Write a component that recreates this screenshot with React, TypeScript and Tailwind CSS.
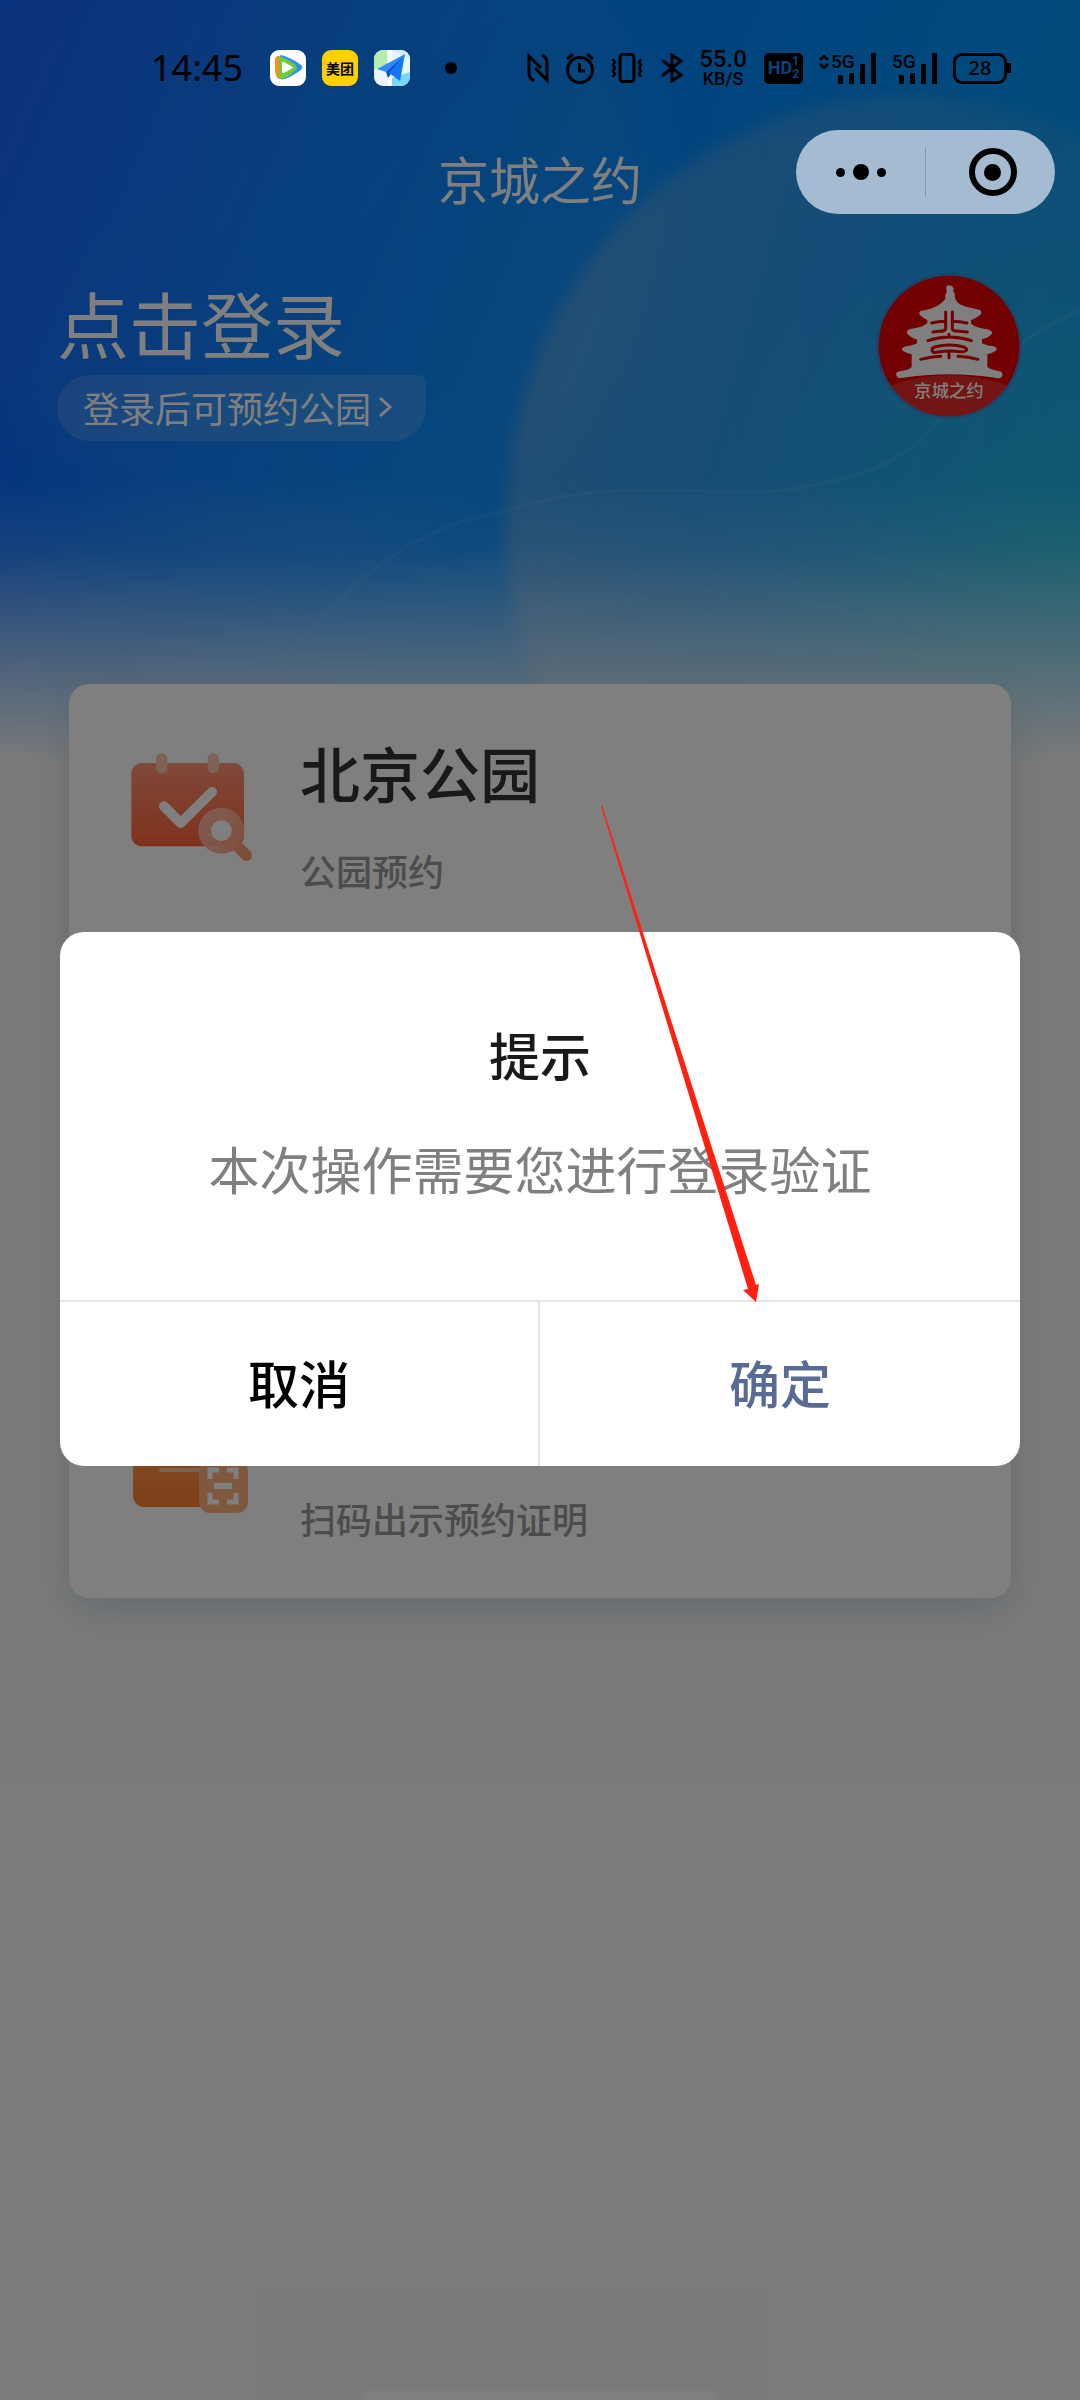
import type { ReactNode } from "react";

const FONT = "font-['Noto_Sans_CJK_SC','Noto_Sans',sans-serif]";

function HeaderBackdrop() {
  return (
    <svg
      aria-hidden="true"
      className="absolute inset-x-0 top-0 h-[760px] w-full"
      viewBox="0 0 1080 760"
      preserveAspectRatio="none"
    >
      <defs>
        <linearGradient id="sky" x1="0" y1="0.2" x2="1" y2="0.5">
          <stop offset="0" stopColor="#1262fa" />
          <stop offset="0.25" stopColor="#0578fc" />
          <stop offset="0.45" stopColor="#0084fe" />
          <stop offset="0.75" stopColor="#0090fc" />
          <stop offset="1" stopColor="#009cf4" />
        </linearGradient>
        <radialGradient id="teal" cx="1080" cy="560" r="380" gradientUnits="userSpaceOnUse">
          <stop offset="0" stopColor="#14c8d0" stopOpacity="0.6" />
          <stop offset="1" stopColor="#14b4e0" stopOpacity="0" />
        </radialGradient>
        <linearGradient id="orb" x1="0" y1="0.35" x2="1" y2="0.65">
          <stop offset="0" stopColor="#c0c0c0" stopOpacity="0.34" />
          <stop offset="0.5" stopColor="#b0c0c8" stopOpacity="0.16" />
          <stop offset="1" stopColor="#b0c8c8" stopOpacity="0.04" />
        </linearGradient>
        <linearGradient id="leftOrb" x1="0" y1="0" x2="0.8" y2="1">
          <stop offset="0" stopColor="#c0d0e0" stopOpacity="0.03" />
          <stop offset="1" stopColor="#c0d0e0" stopOpacity="0.08" />
        </linearGradient>
        <linearGradient id="fade" x1="0" y1="0" x2="0" y2="1">
          <stop offset="0" stopColor="#f5f5f5" stopOpacity="0" />
          <stop offset="0.25" stopColor="#f5f5f5" stopOpacity="0.14" />
          <stop offset="0.75" stopColor="#f5f5f5" stopOpacity="0.72" />
          <stop offset="1" stopColor="#f5f5f5" />
        </linearGradient>
        <filter id="soft" x="-10%" y="-10%" width="120%" height="120%">
          <feGaussianBlur stdDeviation="9" />
        </filter>
        <filter id="softer" x="-20%" y="-20%" width="140%" height="140%">
          <feGaussianBlur stdDeviation="22" />
        </filter>
      </defs>
      <rect width="1080" height="760" fill="url(#sky)" />
      <rect width="1080" height="760" fill="url(#teal)" />
      <circle cx="300" cy="190" r="360" fill="url(#leftOrb)" filter="url(#softer)" />
      <ellipse cx="910" cy="520" rx="404" ry="424" fill="url(#orb)" filter="url(#soft)" />
      <path
        d="M272 677C330 600 400 530 496 513C600 480 660 492 758 492C850 486 910 460 940 420C980 380 1010 340 1080 310"
        fill="none"
        stroke="#fff"
        strokeOpacity="0.07"
        strokeWidth="3"
      />
      <rect y="480" width="1080" height="280" fill="url(#fade)" />
    </svg>
  );
}

function VideoAppIcon() {
  return (
    <svg width="36" height="36" viewBox="0 0 36 36" aria-hidden="true">
      <rect width="36" height="36" rx="9" fill="#fff" />
      <path d="M10 5.500C13 4 30 13 32 16c1 1.500 0 3-2 4.500C25 24.500 15 30 11 29.500z" fill="#2d8ef0" />
      <path d="M5 12c0-5 2-6.500 5-5.500 7 2.500 17 8 17 11S16 29 10 29c-4 0-5-8-5-17z" fill="#6ecb3c" />
      <path d="M5 12c0-4 1-6 4-6v23c-4-1-4-9-4-17z" fill="#ff8d1a" />
      <path d="M12 13.500c0-1.500 1-2 2-1.500l8 4.500c1 .6 1 1.400 0 2l-8 4.500c-1 .5-2 0-2-1.500z" fill="#fff" />
    </svg>
  );
}

function MapAppIcon() {
  return (
    <svg width="36" height="36" viewBox="0 0 36 36" aria-hidden="true">
      <defs>
        <clipPath id="mapClip">
          <rect width="36" height="36" rx="9" />
        </clipPath>
      </defs>
      <g clipPath="url(#mapClip)">
        <rect width="36" height="36" fill="#eaf4fc" />
        <path d="M0 0h13v15L0 20z" fill="#b5ecab" />
        <path d="M18 0h18v9z" fill="#d5eefb" />
        <path d="M18 28l18-6v14H18z" fill="#78d8fc" />
        <path d="M14 0h4v36h-4z" fill="#fff" />
        <path d="M31 4L3 19l9 3z" fill="#2f8bff" />
        <path d="M31 4L12 22l2 6 3-4z" fill="#0a50c0" />
        <path d="M31 4l-5 27-11-8z" fill="#1577f8" />
      </g>
    </svg>
  );
}

function Signal({ arrows = false }: { arrows?: boolean }) {
  return (
    <span className="flex h-[31px]">
      {arrows && (
        <svg className="mt-[2px] mr-[2px]" width="10" height="14" viewBox="0 0 10 14" aria-hidden="true">
          <path d="M1 5l4-4 4 4M1 9l4 4 4-4" fill="none" stroke="#000" strokeWidth="2.500" />
        </svg>
      )}
      <span className="flex w-[29px] flex-col justify-between">
        <span className="font-[Roboto] text-[19px] leading-[18px] font-medium">5G</span>
        <svg className="ml-[7px]" width="16" height="11" viewBox="0 0 16 11" aria-hidden="true">
          <path d="M0 2h5v9H0zM11 0h5v11h-5z" />
        </svg>
      </span>
      <svg width="16" height="31" viewBox="0 0 16 31" aria-hidden="true">
        <path d="M0 11h5v20H0zM11 0h5v31h-5z" />
      </svg>
    </span>
  );
}

function StatusBar() {
  return (
    <div className="relative z-20 flex h-[110px] items-center justify-between pt-[26px] pr-[69px] pl-[151px] text-black">
      <div className="flex items-center">
        <span className="w-[119px] font-['Noto_Sans'] text-[36px] leading-none">14:45</span>
        <div className="flex items-center gap-4">
          <VideoAppIcon />
          <span className="flex size-9 items-center justify-center rounded-[9px] bg-[#ffd000] text-[14px] leading-none font-bold">
            美团
          </span>
          <MapAppIcon />
        </div>
        <span className="ml-[35px] size-3 rounded-full bg-black" />
      </div>

      <div className="flex items-center">
        <svg width="22" height="30" viewBox="0 0 22 30" fill="none" stroke="#000" strokeWidth="3" aria-label="NFC">
          <path d="M7 28C3 26 2 24 2 20V3l12 12M8 15l12 12V10c0-4-1-6-5-8" />
        </svg>
        <svg className="ml-4" width="30" height="32" viewBox="0 0 30 32" fill="none" stroke="#000" strokeWidth="3" aria-label="闹钟">
          <circle cx="15" cy="18" r="12.500" />
          <path d="M14.500 11v8H20M2 7l6-5M28 7l-6-5" />
        </svg>
        <svg className="ml-4" width="32" height="30" viewBox="0 0 32 30" fill="none" stroke="#000" strokeWidth="3" aria-label="振动">
          <rect x="9" y="1.500" width="14" height="27" rx="3" />
          <path d="M2 6l2 3-2 3 2 3-2 3 2 3-2 3M30 6l-2 3 2 3-2 3 2 3-2 3 2 3" strokeWidth="2.500" />
        </svg>
        <svg className="ml-[18px]" width="22" height="30" viewBox="0 0 22 30" fill="none" stroke="#000" strokeWidth="3" aria-label="蓝牙">
          <path d="M1 7l19 15-9 6V2l9 6L1 23" />
        </svg>
        <span className="ml-[15px] flex w-[50px] flex-col items-center font-[Roboto] font-medium">
          <span className="text-2xl leading-[22px]">55.0</span>
          <span className="text-lg leading-[18px]">KB/S</span>
        </span>
        <span className="ml-4 flex h-[31px] w-[39px] items-center justify-center rounded-[5px] bg-black font-[Roboto] leading-none font-bold text-[#06427f]">
          <span className="text-lg leading-none">HD</span>
          <span className="flex flex-col text-xs leading-[13px]">
            <span>1</span>
            <span>2</span>
          </span>
        </span>
        <span className="ml-4 flex items-center gap-4">
          <Signal arrows />
          <Signal />
        </span>
        <span className="ml-4 flex items-center">
          <span className="flex h-[31px] w-[54px] items-center justify-center rounded-[9px] border-3 border-black font-['Noto_Sans'] text-xl leading-none font-medium">
            28
          </span>
          <span className="h-[10px] w-1 bg-black" />
        </span>
      </div>
    </div>
  );
}

function Capsule() {
  return (
    <div className="absolute top-5 right-[25px] z-20 flex h-[84px] w-[259px] items-center rounded-full bg-[#a5bbd1]">
      <button type="button" aria-label="更多" className="flex h-full flex-1 items-center justify-center gap-2">
        <span className="size-[9px] rounded-full bg-black" />
        <span className="size-4 rounded-full bg-black" />
        <span className="size-[9px] rounded-full bg-black" />
      </button>
      <span className="h-[50px] w-px bg-[#8698aa]" />
      <button type="button" aria-label="关闭" className="flex h-full flex-1 items-center justify-center">
        <span className="ml-1 flex size-12 items-center justify-center rounded-full border-6 border-black">
          <span className="size-[17px] rounded-full bg-black" />
        </span>
      </button>
    </div>
  );
}

function PagodaLogo() {
  return (
    <svg width="148" height="148" viewBox="47 37 444 444" role="img" aria-label="京城之约">
      <defs>
        <clipPath id="badge">
          <circle cx="269" cy="259" r="211" />
        </clipPath>
      </defs>
      <circle cx="269" cy="259" r="219" fill="#3a86cc" />
      <g clipPath="url(#badge)">
        <rect x="50" y="40" width="440" height="440" fill="#e40000" />
        <ellipse cx="269" cy="510" rx="300" ry="163" fill="#fff" fillOpacity="0.16" />
      </g>
      <path
        d="M260 80q9-6 18 0q7 5 4 14q6 7 5 20c4 16 20 24 40 29q22 5 35 8q8 8 0 15q-12 10-27 16v10c12 10 30 14 50 17q14 5 14 12c-10 12-20 15-31 18v12c12 6 26 8 40 10q8 8 0 13q-12 8-24 10v38c10 8 24 10 42 14q8 10-2 18q-8 3-16 0c-90-14-188-14-278 0q-14 4-18-4q-4-10 3-14c18-3 34-6 42-14v-38q-14-3-26-10q-8-8 4-13c14-2 26-4 38-10v-12c-14-4-22-8-31-20q2-10 14-12c18-2 36-6 48-18v-8q-12-5-22-14q-6-10 4-14c24-4 56-12 72-36q-2-13 5-20q-4-10-1-17z"
        fill="#fff"
      />
      <g fill="none" stroke="#e40000" strokeWidth="9" strokeLinecap="round" strokeLinejoin="round">
        <path d="M259 157v50q-4 9-14 7l-24 3M217 190q20-5 42-5M279 157v50q3 8 14 7l31 3M279 185q22 0 44 5" />
        <path d="M206 243q64-22 130 0M269 224v8" />
        <path d="M220 276q-6-10 6-14q44-12 88 0q14 8 4 12q-8 4-16 2q-32-4-66 1q-12 3-16-1z" />
        <path d="M269 280v14M184 299q30-8 60-9M296 290q32 1 60 9" />
      </g>
      <text x="269" y="412" textAnchor="middle" fontSize="52" fontWeight="500" fontFamily="Noto Sans CJK SC" fill="#fff">
        京城之约
      </text>
    </svg>
  );
}

function CalendarIcon() {
  return (
    <svg className="mt-3" width="126" height="110" viewBox="90 98 378 330" aria-hidden="true">
      <defs>
        <linearGradient id="cal" x1="0" y1="0" x2="0" y2="1">
          <stop offset="0" stopColor="#ff9474" />
          <stop offset="1" stopColor="#ff6238" />
        </linearGradient>
        <linearGradient id="lens" x1="0" y1="0" x2="1" y2="1">
          <stop offset="0" stopColor="#ffcdb8" stopOpacity="0.8" />
          <stop offset="1" stopColor="#ff9a7a" />
        </linearGradient>
      </defs>
      <rect x="94" y="131" width="338" height="250" rx="32" fill="url(#cal)" />
      <rect x="168" y="101" width="34" height="61" rx="17" fill="#ffc4ac" />
      <rect x="323" y="101" width="34" height="61" rx="17" fill="#ffc4ac" />
      <path d="M192 261l50 50 94-93" fill="none" stroke="#fff" strokeWidth="30" strokeLinecap="round" strokeLinejoin="round" />
      <path d="M410 378l29 30" stroke="#ff9a78" strokeWidth="34" strokeLinecap="round" />
      <circle cx="364" cy="334" r="69" fill="url(#lens)" />
      <circle cx="364" cy="334" r="31" fill="#fff" />
    </svg>
  );
}

function ScanCardIcon() {
  return (
    <svg width="126" height="110" viewBox="0 0 126 110" aria-hidden="true">
      <defs>
        <linearGradient id="wallet" x1="0" y1="0" x2="0" y2="1">
          <stop offset="0" stopColor="#ffa860" />
          <stop offset="1" stopColor="#ff8030" />
        </linearGradient>
      </defs>
      <rect x="3" y="0" width="112" height="103" rx="11" fill="url(#wallet)" />
      <path d="M31 66h40" stroke="#ffc49a" strokeWidth="4" strokeLinecap="round" />
      <rect x="69" y="56" width="49" height="53" rx="11" fill="#ffb27c" />
      <path
        d="M80 75V66h9M97 66h9v9M80 89v9h9M97 98h9v-9"
        fill="none"
        stroke="#fff"
        strokeWidth="5"
      />
      <path d="M84 82h18" stroke="#fff" strokeWidth="6" />
    </svg>
  );
}

function CardRow({ icon, title, note }: { icon: ReactNode; title?: string; note: string }) {
  return (
    <a href="#" className="flex min-h-[140px] items-start gap-11 px-[61px]">
      {icon}
      <span className="flex flex-col justify-end self-stretch">
        {title && <span className="text-[60px] leading-16 font-medium text-[#333]">{title}</span>}
        <span className="pt-10 text-4xl leading-[52px] font-medium text-[#999]">{note}</span>
      </span>
    </a>
  );
}

function LoginDialog() {
  return (
    <div className="absolute inset-0 z-10 flex items-center justify-center bg-black/50 px-[60px] pb-[2px]">
      <div role="dialog" aria-labelledby="dialog-title" className="relative w-full rounded-3xl bg-white">
        <div className="flex flex-col items-center gap-[38px] pt-[84px] pb-[94px] text-[51px]">
          <h2 id="dialog-title" className="leading-[76px] font-medium text-[#1a1a1a]">
            提示
          </h2>
          <p className="leading-[76px] text-[#808080]">本次操作需要您进行登录验证</p>
        </div>
        <div className="grid h-[166px] grid-cols-2 border-t-2 border-[#e4e4e4] pb-1 text-[51px] font-medium">
          <button type="button" className="-mb-1 border-r-2 border-[#e4e4e4] pb-1 text-black">
            取消
          </button>
          <button type="button" className="text-[#576b95]">
            确定
          </button>
        </div>
        <svg
          aria-hidden="true"
          className="absolute top-[-127px] left-[540px]"
          width="162"
          height="498"
          viewBox="0 0 162 498"
        >
          <path d="M1 1L2 0l154 480 3-1-3 18-13-12 5-1z" fill="#ff2010" />
        </svg>
      </div>
    </div>
  );
}

export default function App() {
  return (
    <div className={`relative flex min-h-screen flex-col overflow-hidden bg-[#f5f5f5] ${FONT}`}>
      <HeaderBackdrop />
      <StatusBar />

      <header className="relative">
        <h1 className="pt-[30px] text-center text-[51px] leading-[76px] text-white">京城之约</h1>
      </header>
      <div className="absolute inset-x-0 top-[110px]">
        <Capsule />
      </div>

      <section className="relative flex items-start justify-between pt-[56px] pr-[57px] pl-[57px]">
        <div>
          <button type="button" className="block pb-1 text-7xl leading-[99px] text-white">
            点击登录
          </button>
          <button
            type="button"
            className="flex h-[66px] items-center gap-[7px] rounded-[33px] rounded-tr-lg bg-white/15 pr-[34px] pb-[2px] pl-[26px] text-4xl text-white"
          >
            登录后可预约公园
            <svg width="14" height="22" viewBox="0 0 14 22" fill="none" stroke="#fff" strokeWidth="3" aria-hidden="true">
              <path d="M2 2l10 9-10 9" />
            </svg>
          </button>
        </div>
        <PagodaLogo />
      </section>

      <main className="relative mx-[69px] mt-[243px] flex min-h-[914px] flex-col justify-between rounded-[20px] bg-white pt-[56px] pb-[54px] shadow-[0_12px_40px_#a0b8c880]">
        <CardRow icon={<CalendarIcon />} title="北京公园" note="公园预约" />
        <CardRow icon={<ScanCardIcon />} note="扫码出示预约证明" />
      </main>

      <div className="mt-auto h-[9px] w-1/3 self-center rounded-t-lg bg-white" />

      <LoginDialog />
    </div>
  );
}
